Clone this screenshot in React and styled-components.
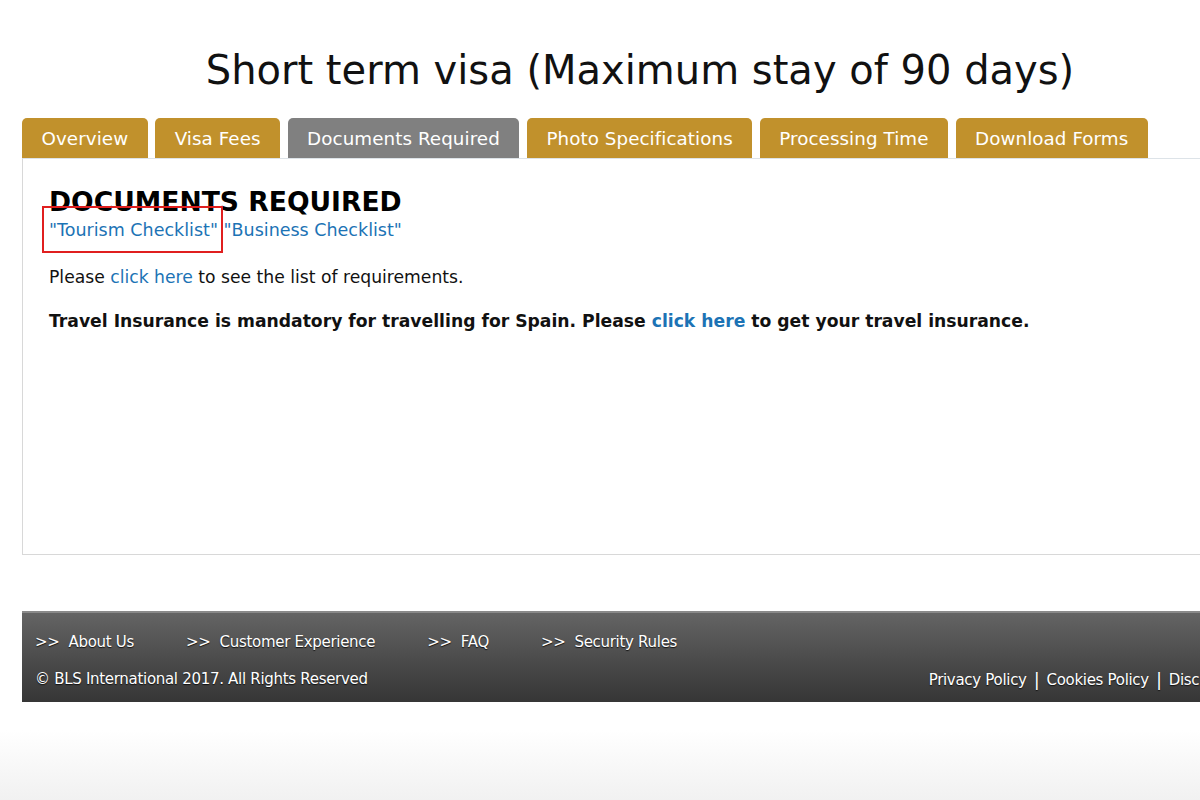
import React from 'react';
import styled, { createGlobalStyle } from 'styled-components';

const GlobalStyle = createGlobalStyle`
  html, body {
    margin: 0;
    padding: 0;
    overflow: hidden;
  }
  body {
    width: 1200px;
    height: 800px;
    font-family: 'DejaVu Sans', Verdana, sans-serif;
    background: linear-gradient(to bottom, #fff 0, #fff 730px, #f1f1f1 800px);
  }
`;

const Page = styled.div`
  width: 1236px;
  margin-left: 22px;
  padding-top: 44px;
`;

const Title = styled.h2`
  margin: 0;
  text-align: center;
  font-weight: normal;
  font-size: 40px;
  line-height: 52px;
  color: #111;
`;

const TabBar = styled.ul`
  list-style: none;
  margin: 22px 0 0;
  padding: 0;
  display: flex;
  gap: 7.5px;
`;

const Tab = styled.li`
  height: 40px;
  padding: 0 19.5px;
  display: flex;
  align-items: center;
  border-radius: 5px 5px 0 0;
  background: ${(p) => (p.active ? '#808080' : '#c1912c')};
  color: #fff;
  font-size: 18.3px;
  letter-spacing: 0.075px;
  cursor: pointer;
`;

const Panel = styled.section`
  position: relative;
  height: 397px;
  box-sizing: border-box;
  border: 1px solid #d8d8d8;
  border-top-color: #dde3e8;
  padding: 28px 26px;
`;

const Heading = styled.h3`
  margin: 0;
  font-size: 26.6px;
  line-height: 30px;
  font-weight: bold;
  color: #000;
`;

const Link = styled.a`
  color: #1c73b5;
  text-decoration: none;
  cursor: pointer;
`;

const Checklists = styled.div`
  font-size: 17.5px;
  line-height: 27px;
`;

const Paragraph = styled.p`
  margin: ${(p) => (p.first ? '21px' : '20px')} 0 0;
  font-size: 17.2px;
  line-height: 24px;
  color: #111;
  font-weight: ${(p) => (p.bold ? 'bold' : 'normal')};
`;

const Highlight = styled.span`
  position: absolute;
  left: 19px;
  top: 47px;
  width: 181px;
  height: 47px;
  border: 2.5px solid #e01f1f;
  box-sizing: border-box;
  pointer-events: none;
`;

const Footer = styled.footer`
  margin-top: 56px;
  height: 91px;
  box-sizing: border-box;
  border-top: 2px solid #8a8a8a;
  background: linear-gradient(to bottom, #646464 0%, #4a4a4a 55%, #363636 100%);
  padding: 17px 13px 0;
  color: #fff;
  font-size: 15px;
  letter-spacing: -0.3px;
  text-shadow: 0 1px 1px #111;
`;

const FooterLinks = styled.div`
  display: flex;
  gap: 52px;
  line-height: 24px;
`;

const FooterLink = styled.span`
  &::before {
    content: '>>';
    margin-right: 9px;
  }
`;

const FooterBottom = styled.div`
  display: flex;
  justify-content: space-between;
  align-items: flex-end;
  margin-top: 14px;
  line-height: 22px;
`;

const Policies = styled.div`
  display: flex;
  gap: 7px;
  transform: translateY(1px);
  white-space: nowrap;
`;

const Divider = styled.span`
  font-size: 18px;
`;

const tabs = [
  'Overview',
  'Visa Fees',
  'Documents Required',
  'Photo Specifications',
  'Processing Time',
  'Download Forms',
];

export default function App() {
  return (
    <>
      <GlobalStyle />
      <Page>
        <Title>Short term visa (Maximum stay of 90 days)</Title>
        <TabBar>
          {tabs.map((t) => (
            <Tab key={t} active={t === 'Documents Required'}>
              {t}
            </Tab>
          ))}
        </TabBar>
        <Panel>
          <Heading>DOCUMENTS REQUIRED</Heading>
          <Checklists>
            <Link>"Tourism Checklist"</Link> <Link>"Business Checklist"</Link>
          </Checklists>
          <Highlight />
          <Paragraph first>
            Please <Link>click here</Link> to see the list of requirements.
          </Paragraph>
          <Paragraph bold>
            Travel Insurance is mandatory for travelling for Spain. Please{' '}
            <Link>click here</Link> to get your travel insurance.
          </Paragraph>
        </Panel>
        <Footer>
          <FooterLinks>
            <FooterLink>About Us</FooterLink>
            <FooterLink>Customer Experience</FooterLink>
            <FooterLink>FAQ</FooterLink>
            <FooterLink>Security Rules</FooterLink>
          </FooterLinks>
          <FooterBottom>
            <span>© BLS International 2017. All Rights Reserved</span>
            <Policies>
              <span>Privacy Policy</span>
              <Divider>|</Divider>
              <span>Cookies Policy</span>
              <Divider>|</Divider>
              <span>Disclaimer</span>
            </Policies>
          </FooterBottom>
        </Footer>
      </Page>
    </>
  );
}
